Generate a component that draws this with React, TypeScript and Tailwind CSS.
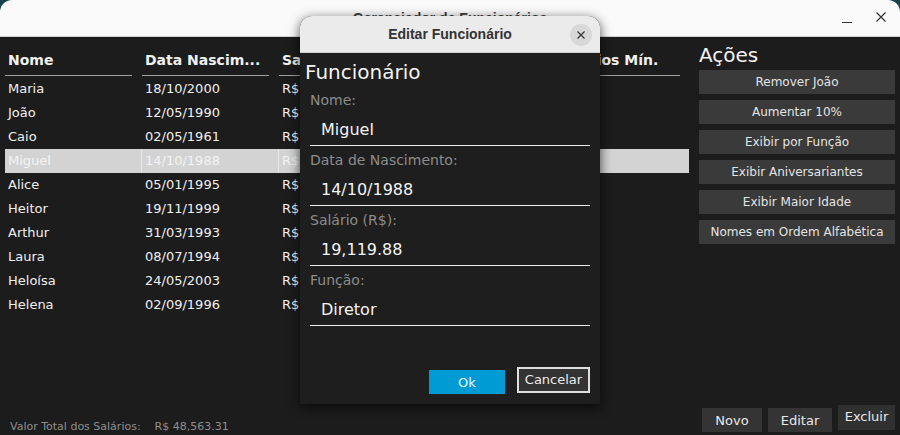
import React from "react";

const rows = [
  ["Maria", "18/10/2000", "R$ 2,009.44", "Operador", "1.66"],
  ["João", "12/05/1990", "R$ 2,284.38", "Operador", "1.88"],
  ["Caio", "02/05/1961", "R$ 9,836.14", "Coordenador", "8.11"],
  ["Miguel", "14/10/1988", "R$ 19,119.88", "Diretor", "15.79"],
  ["Alice", "05/01/1995", "R$ 2,234.68", "Recepcionista", "1.84"],
  ["Heitor", "19/11/1999", "R$ 1,582.72", "Operador", "1.30"],
  ["Arthur", "31/03/1993", "R$ 4,071.84", "Contador", "3.36"],
  ["Laura", "08/07/1994", "R$ 3,017.45", "Gerente", "2.49"],
  ["Heloísa", "24/05/2003", "R$ 1,606.85", "Eletricista", "1.32"],
  ["Helena", "02/09/1996", "R$ 2,799.93", "Gerente", "2.31"],
];

const headers = ["Nome", "Data Nascim...", "Salário", "Função", "Salários Mín."];

const actions = [
  "Remover João",
  "Aumentar 10%",
  "Exibir por Função",
  "Exibir Aniversariantes",
  "Exibir Maior Idade",
  "Nomes em Ordem Alfabética",
];

const fields = [
  ["Nome:", "Miguel"],
  ["Data de Nascimento:", "14/10/1988"],
  ["Salário (R$):", "19,119.88"],
  ["Função:", "Diretor"],
];

export default function App() {
  return (
    <div
      className="w-[900px] h-[435px] overflow-hidden bg-[#16434a] relative"
      style={{ fontFamily: '"DejaVu Sans", sans-serif' }}
    >
      <div className="w-full h-full flex flex-col rounded-t-[12px] overflow-hidden">
        {/* Title bar */}
        <div className="h-[37px] shrink-0 bg-[#fafafa] border-b border-[#d4d4d4] flex items-center relative">
          <div
            className="flex-1 text-center text-[14px] font-bold text-[#3a3a3a]"
            style={{ fontFamily: '"Liberation Sans", sans-serif' }}
          >
            Gerenciador de Funcionários
          </div>
          <div className="absolute right-[12px] top-[8px] flex items-center gap-[20px]">
            <svg width="14" height="20" viewBox="0 0 14 20">
              <path d="M2 14.5h10" stroke="#333" strokeWidth="1.2" />
            </svg>
            <svg width="14" height="20" viewBox="0 0 14 20">
              <path d="M2.5 4.5l9 9M11.5 4.5l-9 9" stroke="#333" strokeWidth="1.2" />
            </svg>
          </div>
        </div>

        {/* Body */}
        <div className="flex-1 bg-[#1c1c1c] flex flex-col text-[#f0f0f0]">
          <div className="flex-1 flex">
            {/* Table */}
            <div className="ml-[5px] w-[684px] flex flex-col">
              <div className="grid grid-cols-[127px_127px_127px_127px_127px] gap-x-[10px] h-[40px]">
                {headers.map((h, i) => (
                  <div key={i} className="flex flex-col justify-end">
                    <div
                      className={
                        "text-[14px] font-bold leading-[17px] pl-[3px] whitespace-nowrap " +
                        (i === 4 ? "text-right pr-[24px]" : "")
                      }
                    >
                      {h}
                    </div>
                    <div className="mt-[6px] mb-[1px] h-[1.5px] bg-[#a0a0a0]" />
                  </div>
                ))}
              </div>
              {rows.map((r, ri) => {
                const sel = ri === 3;
                return (
                  <div
                    key={ri}
                    className={
                      "grid grid-cols-[127px_127px_127px_127px_127px] gap-x-[10px] h-[24px] " +
                      (sel ? "bg-[#d3d3d3] text-[#f4f4f4]" : "")
                    }
                  >
                    {r.map((c, ci) => (
                      <div
                        key={ci}
                        className={
                          "text-[13px] leading-[24px] pl-[3px] whitespace-nowrap overflow-hidden " +
                          (sel && ci > 0 ? "border-l border-[#e6e6e6] -ml-[1px]" : "")
                        }
                      >
                        {c}
                      </div>
                    ))}
                  </div>
                );
              })}
            </div>

            {/* Actions */}
            <div className="ml-[10px] w-[196px] flex flex-col">
              <div className="text-[20px] leading-[24px] mt-[6px] text-[#f4f4f4]">Ações</div>
              <div className="mt-[3px] flex flex-col gap-[6px]">
                {actions.map((a) => (
                  <div
                    key={a}
                    className="h-[24px] bg-[#3a3a3a] text-[12px] leading-[24px] text-center text-[#e4e4e4] whitespace-nowrap"
                  >
                    {a}
                  </div>
                ))}
              </div>
            </div>
          </div>

          {/* Bottom bar */}
          <div className="h-[30px] flex items-end justify-between">
            <div className="flex text-[11px] leading-[14px] text-[#8e8e8e] ml-[10px] mb-[1px]">
              <span>Valor Total dos Salários:</span>
              <span className="ml-[14px]">R$ 48,563.31</span>
            </div>
            <div className="flex items-end gap-[6px] mr-[5px]">
              <div className="w-[60px] h-[24px] mb-[3px] bg-[#343434] text-[13px] leading-[25px] text-center text-[#e8e8e8]">
                Novo
              </div>
              <div className="w-[64px] h-[24px] mb-[3px] bg-[#343434] text-[13px] leading-[25px] text-center text-[#e8e8e8]">
                Editar
              </div>
              <div className="w-[57px] h-[25px] mb-[5px] bg-[#303030] text-[13px] leading-[23px] text-center text-[#e8e8e8]">
                Excluir
              </div>
            </div>
          </div>
        </div>
      </div>

      {/* Dialog */}
      <div className="absolute left-[300px] top-[16px] w-[300px] h-[388px] rounded-t-[12px] overflow-hidden bg-[#1e1e1e] shadow-[0_3px_12px_rgba(0,0,0,0.7)] flex flex-col">
        <div className="h-[37px] shrink-0 bg-[#ebebeb] border-b border-[#cfcfcf] flex items-center relative">
          <div
            className="flex-1 text-center text-[14px] font-bold text-[#333]"
            style={{ fontFamily: '"Liberation Sans", sans-serif' }}
          >
            Editar Funcionário
          </div>
          <div className="absolute left-[270px] top-[8px] w-[22px] h-[22px] rounded-full bg-[#d8d8d8] flex items-center justify-center">
            <svg width="10" height="10" viewBox="0 0 10 10">
              <path d="M1.5 1.5l7 7M8.5 1.5l-7 7" stroke="#333" strokeWidth="1.2" />
            </svg>
          </div>
        </div>
        <div className="flex-1 flex flex-col">
          <div className="text-[20px] leading-[24px] text-[#f4f4f4] pl-[5px] mt-[7px]">Funcionário</div>
          <div className="flex flex-col pl-[10px] pr-[10px] mt-[6px]">
            {fields.map(([l, v]) => (
              <div key={l} className="flex flex-col mb-[4px]">
                <div className="text-[14px] leading-[20px] text-[#8c8c8c]">{l}</div>
                <div className="h-[36px] border-b-[1.5px] border-[#f0f0f0] flex items-center pl-[11px] pt-[4px] text-[16px] text-[#f4f4f4]">
                  {v}
                </div>
              </div>
            ))}
          </div>
          <div className="flex-1" />
          <div className="flex items-end justify-end gap-[12px] pr-[10px] mb-[10px]">
            <div className="w-[76px] h-[24px] bg-[#009ad5] text-[13px] leading-[26px] text-center text-[#eaf6fb]">
              Ok
            </div>
            <div className="w-[73px] h-[26px] mb-[1px] bg-[#333] border-2 border-[#dedede] text-[13px] leading-[22px] text-center text-[#ececec]">
              Cancelar
            </div>
          </div>
        </div>
      </div>
    </div>
  );
}
